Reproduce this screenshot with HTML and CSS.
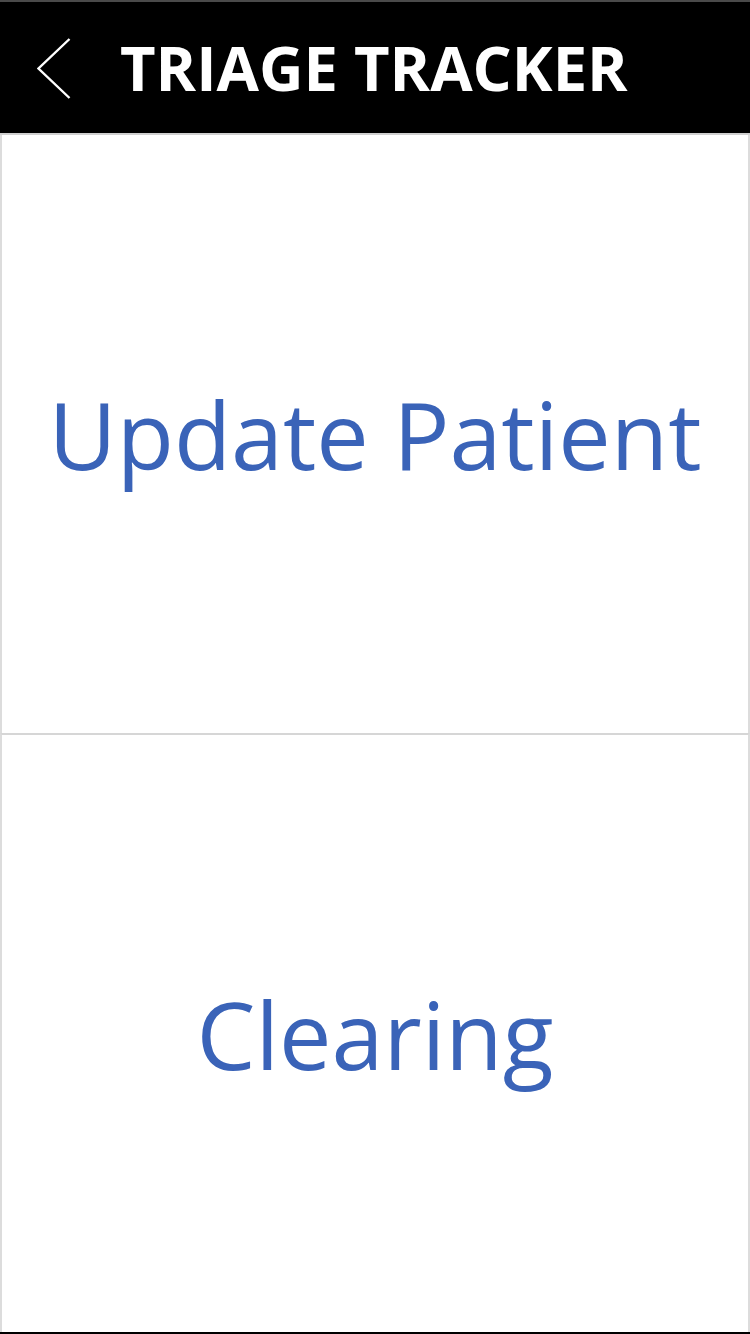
FILE: index.html
```html
<!DOCTYPE html>
<html>
<head>
<meta charset="utf-8">
<link rel="stylesheet" href="styles.css">
</head>
<body>
<div class="app">
  <header class="topbar">
    <svg class="back" width="34" height="62" viewBox="0 0 34 62">
      <polyline points="32.5,1 1.5,30.5 32.5,60" fill="none" stroke="#fff" stroke-width="2.4"/>
    </svg>
    <h1 class="title">TRIAGE TRACKER</h1>
  </header>
  <main class="menu">
    <div class="cell">Update Patient</div>
    <div class="cell">Clearing</div>
  </main>
</div>
</body>
</html>
```
FILE: styles.css
```css
html, body {
  margin: 0;
  padding: 0;
  background: #000;
}
.app {
  width: 750px;
  height: 1334px;
  display: flex;
  flex-direction: column;
  border-top: 2px solid #4a4a4a;
  border-bottom: 2px solid #000;
  box-sizing: border-box;
  font-family: "Open Sans", "Noto Sans", sans-serif;
}
.topbar {
  height: 133px;
  background: #000;
  display: flex;
  align-items: center;
  padding-left: 37px;
  gap: 49px;
  border-bottom: 2px solid #cfcfcf;
  box-sizing: border-box;
}
.back {
  flex: none;
  margin-top: 2px;
}
.title {
  margin: 0;
  color: #fff;
  font-weight: 700;
  font-size: 61.5px;
  line-height: 1;
  letter-spacing: 0;
}
.menu {
  flex: 1;
  display: flex;
  flex-direction: column;
  background: #fff;
}
.cell {
  flex: 1;
  display: flex;
  align-items: center;
  justify-content: center;
  color: #3a63b8;
  font-size: 93.5px;
  border-left: 2px solid #dcdcdc;
  border-right: 2px solid #dcdcdc;
  box-sizing: border-box;
}
.cell + .cell {
  border-top: 2px solid #d6d6d6;
}
```
